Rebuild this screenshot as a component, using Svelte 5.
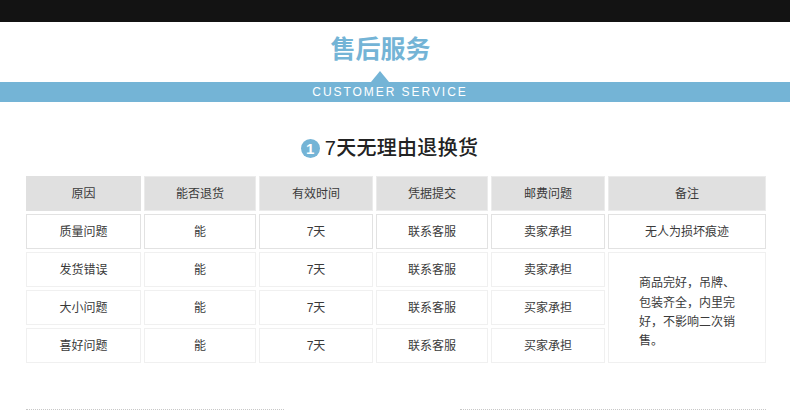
<script lang="ts">
	// After-sales service section: banner, heading and return policy table
	const headers = ['原因', '能否退货', '有效时间', '凭据提交', '邮费问题', '备注'];
	const rows = [
		['质量问题', '能', '7天', '联系客服', '卖家承担'],
		['发货错误', '能', '7天', '联系客服', '卖家承担'],
		['大小问题', '能', '7天', '联系客服', '买家承担'],
		['喜好问题', '能', '7天', '联系客服', '买家承担']
	];
</script>

<div class="page">
	<div class="topbar"></div>
	<h1 class="title">售后服务</h1>
	<div class="banner">
		<span class="arrow"></span>
		<span class="banner-text">CUSTOMER SERVICE</span>
	</div>
	<h2 class="heading">
		<span class="num">1</span>
		<span class="heading-text">7天无理由退换货</span>
	</h2>
	<div class="table">
		{#each headers as h, i}
			<div class="cell head" class:flat={i === 0}>{h}</div>
		{/each}
		{#each rows as row, r}
			{#each row as c}
				<div class="cell" class:strong={r === 0}>{c}</div>
			{/each}
			{#if r === 0}
				<div class="cell strong">无人为损坏痕迹</div>
			{:else if r === 1}
				<div class="cell note">商品完好，吊牌、包装齐全，内里完好，不影响二次销售。</div>
			{/if}
		{/each}
	</div>
	<div class="dots">
		<div class="dot-line left"></div>
		<div class="dot-line right"></div>
	</div>
</div>

<style>
	:global(body) {
		margin: 0;
		background: #fff;
	}

	.page {
		width: 790px;
		height: 412px;
		overflow: hidden;
		font-family: "Liberation Sans", "Noto Sans CJK SC", sans-serif;
		color: #333;
	}

	.topbar {
		height: 22px;
		background: #131313;
	}

	.title {
		margin: 0;
		height: 60px;
		padding: 11px 29px 0 0;
		box-sizing: border-box;
		text-align: center;
		font-size: 25px;
		line-height: 32px;
		font-weight: 700;
		color: #74b4d6;
	}

	.banner {
		position: relative;
		height: 20px;
		padding-right: 10px;
		background: #74b4d6;
		text-align: center;
	}

	.arrow {
		position: absolute;
		left: 371px;
		top: -11px;
		width: 0;
		height: 0;
		border-left: 9px solid transparent;
		border-right: 9px solid transparent;
		border-bottom: 11px solid #74b4d6;
	}

	.banner-text {
		font-size: 12px;
		line-height: 21px;
		letter-spacing: 1.95px;
		color: #fff;
		display: block;
	}

	.heading {
		display: flex;
		justify-content: center;
		align-items: center;
		gap: 5px;
		margin: 0;
		height: 74px;
		padding: 18px 11px 0 0;
		box-sizing: border-box;
		font-size: 20px;
		font-weight: 500;
		line-height: 28px;
		color: #222;
	}

	.heading-text {
		letter-spacing: 0.3px;
	}

	.num {
		width: 19px;
		height: 19px;
		border-radius: 50%;
		background: #74b4d6;
		color: #fff;
		font-size: 15px;
		font-weight: 700;
		line-height: 19px;
		text-align: center;
	}

	.table {
		display: grid;
		grid-template-columns: 115px 112px 114px 112px 114px 158px;
		grid-auto-rows: 35px;
		gap: 3px;
		margin-left: 26px;
		width: 740px;
	}

	.cell {
		display: flex;
		align-items: center;
		justify-content: center;
		box-sizing: border-box;
		border: 1px solid #f0f0f0;
		padding-bottom: 2px;
		font-size: 12px;
		color: #3a3a3a;
		text-align: center;
	}

	.head {
		background: #e0e0e0;
		border-color: #ebebeb;
		padding-bottom: 3px;
	}

	.head.flat {
		border-color: #e0e0e0;
	}

	.strong {
		border-color: #e2e2e2;
	}

	.note {
		grid-column: 6;
		grid-row: 3 / span 3;
		padding: 11px 22px 0 30px;
		text-align: left;
		justify-content: flex-start;
		line-height: 19.3px;
	}

	.dots {
		display: flex;
		justify-content: space-between;
		margin: 46px 24px 0 26px;
	}

	.dot-line {
		height: 0;
		border-top: 1px dotted #c8c8c8;
	}

	.left {
		width: 258px;
	}

	.right {
		width: 306px;
	}
</style>
